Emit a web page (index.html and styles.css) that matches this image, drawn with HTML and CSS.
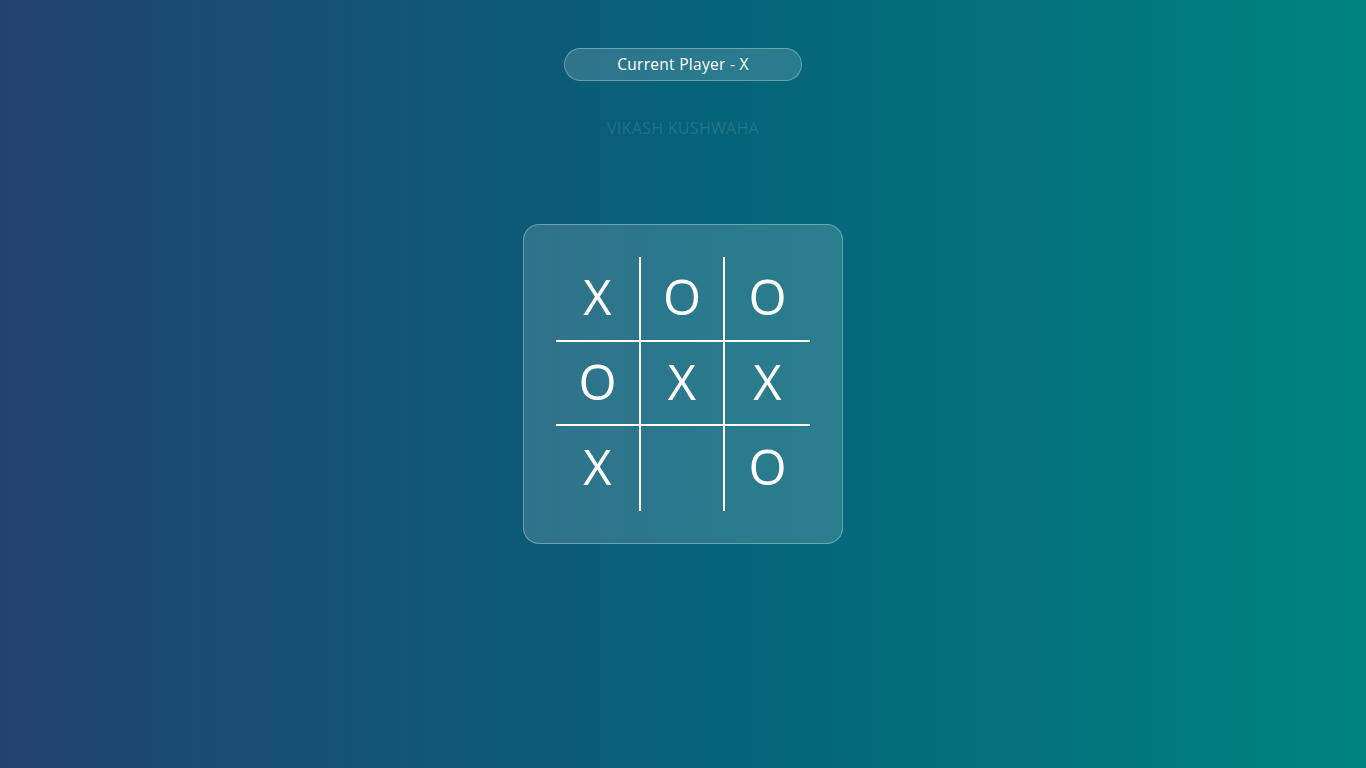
FILE: index.html
```html
<!DOCTYPE html>
<html lang="en">
<head>
<meta charset="UTF-8">
<title>Tic Tac Toe</title>
<link rel="stylesheet" href="styles.css">
</head>
<body>
<main class="app">
  <div class="status">Current Player - X</div>
  <div class="author">VIKASH KUSHWAHA</div>
  <div class="board">
    <div class="grid">
      <div class="cell">X</div>
      <div class="cell">O</div>
      <div class="cell">O</div>
      <div class="cell">O</div>
      <div class="cell">X</div>
      <div class="cell">X</div>
      <div class="cell">X</div>
      <div class="cell"></div>
      <div class="cell">O</div>
    </div>
  </div>
</main>
</body>
</html>
```

FILE: styles.css
```css
* { box-sizing: border-box; }
html, body { margin: 0; height: 100%; }
body {
  background: linear-gradient(to right, #23436f 0%, #066179 50%, #008380 100%);
  font-family: "Open Sans", "Lato", sans-serif;
  color: #fff;
}
.app {
  display: flex;
  flex-direction: column;
  align-items: center;
  padding-top: 48px;
}
.status {
  width: 238px;
  height: 33px;
  border-radius: 17px;
  background: rgba(255,255,255,0.15);
  border: 1px solid rgba(255,255,255,0.3);
  display: flex;
  align-items: center;
  justify-content: center;
  font-size: 15.5px;
  letter-spacing: 0.3px;
  padding-bottom: 2px;
}
.author {
  margin-top: 37px;
  font-size: 16px;
  letter-spacing: 0.3px;
  color: rgba(255,255,255,0.13);
  line-height: 20px;
}
.board {
  margin-top: 86px;
  width: 320px;
  height: 320px;
  border-radius: 16px;
  background: rgba(255,255,255,0.15);
  border: 1px solid rgba(255,255,255,0.3);
  padding: 32px 30px 29px 32px;
}
.grid {
  display: grid;
  grid-template-columns: 85px 84px 85px;
  grid-template-rows: 85px 84px 85px;
}
.cell {
  display: flex;
  align-items: center;
  justify-content: center;
  font-size: 49px;
  font-weight: 400;
  line-height: 1;
  padding-bottom: 4px;
}
.cell:nth-child(-n+6) { border-bottom: 2px solid #fff; }
.cell:nth-child(3n+1), .cell:nth-child(3n+2) { border-right: 2px solid #fff; }
```
